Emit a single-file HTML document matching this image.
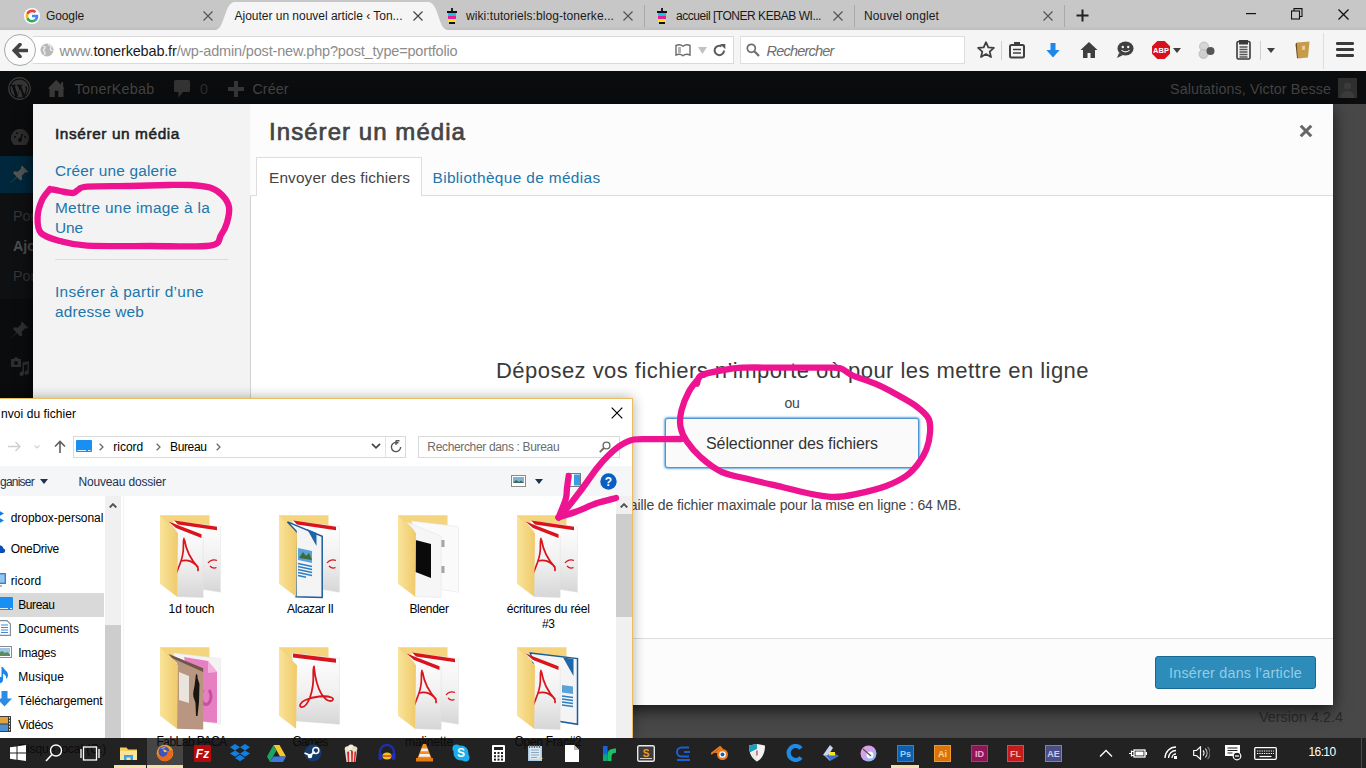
<!DOCTYPE html>
<html lang="fr">
<head>
<meta charset="utf-8">
<title>Ajouter un nouvel article</title>
<style>
*{box-sizing:border-box;margin:0;padding:0}
html,body{width:1366px;height:768px;overflow:hidden;background:#484848;font-family:"Liberation Sans",sans-serif;}
body{position:relative}
.abs{position:absolute}
.t{position:absolute;white-space:nowrap;line-height:1}
/* ---------- Firefox chrome ---------- */
#tabstrip{left:0;top:0;width:1366px;height:30px;background:linear-gradient(#c7c7c7 0,#c7c7c7 26px,#bebebe 30px)}
#navbar{left:0;top:30px;width:1366px;height:41px;background:#f5f5f5}
#activetab{left:234px;top:2px;width:195px;height:29px;background:#f5f5f5}
#urlbar{left:33px;top:36px;width:701px;height:28px;background:#fff;border:1px solid #d9d9d9;border-left:none}
#searchbar{left:740px;top:36px;width:225px;height:28px;background:#fff;border:1px solid #dedede}

/* firefox details */
.tabx{position:absolute;width:10px;height:10px}
.tabsep{position:absolute;top:5px;width:1px;height:22px;background:#a9a9a9}
.ff{font-size:12px;color:#1a1a1a}
.nsep{position:absolute;top:37px;width:1px;height:27px;background:#dcdcdc}
/* ---------- WP admin ---------- */
#adminbar{left:0;top:71px;width:1366px;height:33px;background:#0b0c0d}
#wpside{left:0;top:104px;width:33px;height:634px;background:#0b0c0d}

.ab{font-size:14.300px;color:#434343}
.ml{font-size:15.400px;color:#2076ab}
/* ---------- Modal ---------- */
#modal{left:33px;top:104px;width:1300px;height:601px;background:#fff;box-shadow:0 5px 15px rgba(0,0,0,.7)}
#mmenu{left:0;top:0;width:218px;height:601px;background:#f3f3f3;border-right:1px solid #d2d2d2}
#mtitle{left:217px;top:0;width:1083px;height:54px;background:#fcfcfc}
#mrouter{left:217px;top:54px;width:1083px;height:38px;background:#fcfcfc;border-bottom:1px solid #ddd}
#mtoolbar{left:217px;top:534px;width:1083px;height:67px;background:#fcfcfc;border-top:1px solid #ddd}
/* ---------- File dialog ---------- */
#fdlg{left:0;top:398px;width:633px;height:340px;background:#fff;border:none;box-shadow:0 0 12px rgba(0,0,0,.33);overflow:hidden}
.fd{font-size:12px;color:#000}
.tr{font-size:12px;color:#000}
.chev{position:absolute;width:5px;height:8px}
/* ---------- Taskbar ---------- */
#taskbar{left:0;top:738px;width:1366px;height:30px;background:#222}
</style>
</head>
<body>
<!-- FIREFOX -->
<div class="abs" id="tabstrip"></div>
<div class="abs" id="navbar"></div>
<div class="abs" id="activetab"></div>
<svg class="abs" style="left:215px;top:2px" width="20" height="28" viewBox="0 0 20 28"><path d="M0 28 C10 28 9 0 20 0 L20 28 Z" fill="#f5f5f5"/></svg>
<svg class="abs" style="left:428px;top:2px" width="20" height="28" viewBox="0 0 20 28"><path d="M20 28 C10 28 11 0 0 0 L0 28 Z" fill="#f5f5f5"/></svg>
<!-- tab 1 -->
<svg class="abs" style="left:24px;top:8px" width="16" height="16" viewBox="0 0 48 48"><circle cx="24" cy="24" r="24" fill="#fff"/><path fill="#EA4335" d="M24 12.5c3.5 0 6 1.500 7.500 2.800l5.500-5.400C33.600 6.800 29.200 4.800 24 4.800 16.500 4.800 10 9.100 6.800 15.400l6.400 5C14.800 15.800 19 12.500 24 12.500z"/><path fill="#4285F4" d="M42.800 24.400c0-1.600-.1-2.700-.4-3.900H24v7.300h10.600c-.2 1.800-1.400 4.500-4 6.300l6.200 4.800c3.700-3.400 6-8.400 6-14.500z"/><path fill="#FBBC05" d="M13.200 27.600c-.4-1.200-.6-2.400-.6-3.600s.2-2.500.6-3.600l-6.400-5C5.500 18 4.800 20.900 4.800 24s.7 6 2 8.600l6.400-5z"/><path fill="#34A853" d="M24 43.200c5.200 0 9.500-1.700 12.700-4.600l-6.200-4.800c-1.600 1.100-3.800 1.900-6.500 1.900-5 0-9.200-3.300-10.800-7.900l-6.400 5C10 38.900 16.500 43.200 24 43.200z"/></svg>
<span class="t ff" style="left:46px;top:10px;--w:38;letter-spacing:-0.117px">Google</span>
<svg class="tabx" style="left:203px;top:11px" viewBox="0 0 10 10"><path d="M0.500 0.500L9.500 9.500M9.500 0.500L0.500 9.500" stroke="#555" stroke-width="1.200" fill="none"/></svg>
<!-- tab 2 active -->
<span class="t ff" style="left:234.500px;top:10px;--w:168;letter-spacing:-0.016px">Ajouter un nouvel article ‹ Ton...</span>
<svg class="tabx" style="left:413px;top:11px" viewBox="0 0 10 10"><path d="M0.500 0.500L9.500 9.500M9.500 0.500L0.500 9.500" stroke="#444" stroke-width="1.200" fill="none"/></svg>
<!-- tab 3 -->
<svg class="abs" style="left:446px;top:8px" width="12" height="17" viewBox="0 0 12 17"><rect x="5" y="0" width="2" height="3" fill="#222"/><rect x="1" y="3" width="10" height="2" fill="#111"/><rect x="2" y="5" width="8" height="3" fill="#19c3e6"/><rect x="2" y="8" width="8" height="3" fill="#e81e9a"/><rect x="2" y="11" width="8" height="3" fill="#f5e61e"/><rect x="3" y="14" width="6" height="2" fill="#111"/></svg>
<span class="t ff" style="left:466px;top:10px;--w:148;letter-spacing:0.086px">wiki:tutoriels:blog-tonerke...</span>
<svg class="tabx" style="left:623px;top:11px" viewBox="0 0 10 10"><path d="M0.500 0.500L9.500 9.500M9.500 0.500L0.500 9.500" stroke="#555" stroke-width="1.200" fill="none"/></svg>
<div class="tabsep" style="left:644px"></div>
<!-- tab 4 -->
<svg class="abs" style="left:656px;top:8px" width="12" height="17" viewBox="0 0 12 17"><rect x="5" y="0" width="2" height="3" fill="#222"/><rect x="1" y="3" width="10" height="2" fill="#111"/><rect x="2" y="5" width="8" height="3" fill="#19c3e6"/><rect x="2" y="8" width="8" height="3" fill="#e81e9a"/><rect x="2" y="11" width="8" height="3" fill="#f5e61e"/><rect x="3" y="14" width="6" height="2" fill="#111"/></svg>
<span class="t ff" style="left:676px;top:10px;--w:145;letter-spacing:-0.468px">accueil [TONER KEBAB WI...</span>
<svg class="tabx" style="left:833px;top:11px" viewBox="0 0 10 10"><path d="M0.500 0.500L9.500 9.500M9.500 0.500L0.500 9.500" stroke="#555" stroke-width="1.200" fill="none"/></svg>
<div class="tabsep" style="left:854px"></div>
<!-- tab 5 -->
<span class="t ff" style="left:864px;top:10px;--w:75;letter-spacing:0.124px">Nouvel onglet</span>
<svg class="tabx" style="left:1043px;top:11px" viewBox="0 0 10 10"><path d="M0.500 0.500L9.500 9.500M9.500 0.500L0.500 9.500" stroke="#555" stroke-width="1.200" fill="none"/></svg>
<div class="tabsep" style="left:1064px"></div>
<svg class="abs" style="left:1076px;top:9px" width="13" height="13" viewBox="0 0 13 13"><path d="M6.500 0.500V12.500M0.500 6.500H12.500" stroke="#222" stroke-width="2" fill="none"/></svg>
<!-- window controls -->
<svg class="abs" style="left:1246px;top:13px" width="10" height="2" viewBox="0 0 10 2"><rect width="10" height="1.200" fill="#111"/></svg>
<svg class="abs" style="left:1291px;top:8px" width="12" height="12" viewBox="0 0 12 12"><rect x="0.500" y="3" width="8" height="8" fill="none" stroke="#111" stroke-width="1.100"/><path d="M3 3V0.600H11V8.500H8.500" fill="none" stroke="#111" stroke-width="1.100"/></svg>
<svg class="abs" style="left:1338px;top:9px" width="11" height="11" viewBox="0 0 11 11"><path d="M0.500 0.500L10.500 10.500M10.500 0.500L0.500 10.500" stroke="#111" stroke-width="1.300" fill="none"/></svg>
<!-- nav bar -->
<div class="abs" id="urlbar"></div>
<div class="abs" style="left:3.700px;top:33.800px;width:32px;height:32px;border-radius:50%;background:#fbfbfb;border:1px solid #a8a8a8"></div>
<svg class="abs" style="left:12px;top:42.500px" width="16" height="15" viewBox="0 0 16 15"><path d="M8 1.500L2.200 7.500L8 13.500M2.500 7.500H15" stroke="#444" stroke-width="3.600" fill="none" stroke-linejoin="miter" stroke-linecap="round"/></svg>
<svg class="abs" style="left:40px;top:43px" width="14" height="14" viewBox="0 0 14 14"><circle cx="7" cy="7" r="6.500" fill="#b9b9b9"/><path d="M3 3.500c1.500-.5 2.500.5 2 1.500s-2 1-1.500 2.500 1.500 1 1.500 2.500-.5 1.500-1 1M8 1.500c1 1 2.500.5 3 2s-1 1.500-.5 3 1.500 1 2 .5" stroke="#eee" stroke-width="1.300" fill="none"/></svg>
<span class="t" style="left:59.500px;top:44px;font-size:14.500px;color:#8c8c8c;--w:398;letter-spacing:-0.174px">www.<span style="color:#1a1a1a">tonerkebab.fr</span>/wp-admin/post-new.php?post_type=portfolio</span>
<svg class="abs" style="left:675px;top:44px" width="16" height="13" viewBox="0 0 16 13"><path d="M1 1.500c2.500-1 5-1 7 .8c2-1.800 4.500-1.800 7-.8v9.500c-2.500-1-5-1-7 .8c-2-1.800-4.500-1.800-7-.8z" fill="none" stroke="#6a6a6a" stroke-width="1.400"/><path d="M3 4h3M3 6h3M3 8h3" stroke="#6a6a6a" stroke-width="1"/></svg>
<svg class="abs" style="left:698px;top:47px" width="9" height="7" viewBox="0 0 9 7"><path d="M0 0H9L4.500 7Z" fill="#c2c2c2"/></svg>
<svg class="abs" style="left:713px;top:44px" width="13" height="13" viewBox="0 0 13 13"><path d="M11 6.500A4.700 4.700 0 1 1 8.500 2.300" fill="none" stroke="#5a5a5a" stroke-width="2"/><path d="M7 0H12.300V5.300Z" fill="#5a5a5a"/></svg>
<div class="abs" id="searchbar"></div>
<svg class="abs" style="left:746px;top:43px" width="14" height="14" viewBox="0 0 14 14"><circle cx="5.300" cy="5.300" r="4" fill="none" stroke="#6e6e6e" stroke-width="1.700"/><path d="M8.300 8.300L13 13" stroke="#6e6e6e" stroke-width="2.200"/></svg>
<span class="t" style="left:766.500px;top:44px;font-size:14.500px;font-style:italic;color:#6d6d6d;--w:67;letter-spacing:-0.795px">Rechercher</span>
<!-- toolbar icons -->
<svg class="abs" style="left:976px;top:40px" width="20" height="19" viewBox="0 0 20 19"><path d="M10 2.200l2.300 5.200 5.600.5-4.200 3.700 1.300 5.500-5-3-5 3 1.300-5.500L2.100 7.900l5.600-.5z" fill="none" stroke="#3f3f3f" stroke-width="1.800" stroke-linejoin="round"/></svg>
<div class="nsep" style="left:1001px;top:41px;height:19px;background:#cfcfcf"></div>
<svg class="abs" style="left:1009px;top:41px" width="16" height="18" viewBox="0 0 16 18"><rect x="1" y="4" width="14" height="12.500" rx="1.500" fill="none" stroke="#3f3f3f" stroke-width="2"/><rect x="5" y="1" width="6" height="4" fill="#3f3f3f"/><path d="M4 8.500h8M4 12h8" stroke="#3f3f3f" stroke-width="1.600"/></svg>
<svg class="abs" style="left:1046px;top:43px" width="14" height="15" viewBox="0 0 16 18"><path d="M5 0h6v8.500h5L8 17.500 0 8.500h5z" fill="#1e88e8"/></svg>
<svg class="abs" style="left:1080px;top:41px" width="18" height="17" viewBox="0 0 18 17"><path d="M9 1L0.500 9h2.500v8h4.500v-5h3v5h4.500V9h2.500z" fill="#3f3f3f"/></svg>
<svg class="abs" style="left:1116px;top:41px" width="18" height="18" viewBox="0 0 18 18"><ellipse cx="9.500" cy="7.500" rx="8" ry="7" fill="#3f3f3f"/><path d="M3 12l-2 5 6-3z" fill="#3f3f3f"/><circle cx="6.800" cy="6" r="1.200" fill="#f4f4f4"/><circle cx="12.200" cy="6" r="1.200" fill="#f4f4f4"/><path d="M5.500 9c2 2.500 6 2.500 8 0" stroke="#f4f4f4" stroke-width="1.200" fill="none"/></svg>
<svg class="abs" style="left:1152px;top:41px" width="18" height="18" viewBox="0 0 18 18"><path d="M5.300 0h7.400L18 5.300v7.400L12.700 18H5.300L0 12.700V5.300z" fill="#d8121c"/><text x="9" y="12" font-family="Liberation Sans" font-weight="bold" font-size="7.500" fill="#fff" text-anchor="middle">ABP</text></svg>
<svg class="abs" style="left:1173px;top:48px" width="8" height="5" viewBox="0 0 8 5"><path d="M0 0h8L4 5z" fill="#3f3f3f"/></svg>
<svg class="abs" style="left:1197px;top:41px" width="20" height="19" viewBox="0 0 20 19"><circle cx="7" cy="5.500" r="4.500" fill="#d6d6d6" stroke="#aaa" stroke-width=".6"/><circle cx="6.500" cy="13" r="4.500" fill="#cfcfcf" stroke="#aaa" stroke-width=".6"/><circle cx="13.500" cy="10" r="4" fill="#555"/></svg>
<svg class="abs" style="left:1236px;top:40px" width="15" height="20" viewBox="0 0 15 20"><rect x="1" y="1.500" width="13" height="17.500" rx="1.500" fill="#f0f0f0" stroke="#3a3a3a" stroke-width="1.600"/><rect x="3" y="0" width="9" height="4.500" fill="#3a3a3a"/><path d="M3.500 7h8M3.500 9.500h8M3.500 12h8M3.500 14.500h8M3.500 17h8" stroke="#555" stroke-width="1.300"/></svg>
<div class="nsep" style="left:1260px;top:41px;height:19px;background:#cfcfcf"></div>
<svg class="abs" style="left:1267px;top:48px" width="8" height="5" viewBox="0 0 8 5"><path d="M0 0h8L4 5z" fill="#3f3f3f"/></svg>
<svg class="abs" style="left:1294px;top:41px" width="17" height="18" viewBox="0 0 17 18"><path d="M3 1.500L15.500 0.500 14 16.500 4 17.500z" fill="#c89b4a"/><path d="M3 1.500L1.500 3 3 17 4 17.500z" fill="#6b4a1c"/><path d="M8 5l3-.3v4l-3 .3z" fill="#e9cf96"/></svg>
<div class="nsep" style="left:1323px;top:33px;height:36px;background:#dedede"></div>
<svg class="abs" style="left:1336px;top:42px" width="18" height="15" viewBox="0 0 18 15"><rect y="0" width="18" height="3" rx="1.200" fill="#3a3a3a"/><rect y="6" width="18" height="3" rx="1.200" fill="#3a3a3a"/><rect y="12" width="18" height="3" rx="1.200" fill="#3a3a3a"/></svg>
<!-- WP -->
<div class="abs" id="adminbar"></div>
<div class="abs" id="wpside"></div>
<div class="abs" style="left:0;top:156px;width:33px;height:37px;background:#00273b"></div>
<div class="abs" style="left:0;top:193px;width:33px;height:106px;background:#0f1012"></div>
<!-- admin bar items -->
<svg class="abs" style="left:8px;top:76.500px" width="23" height="23" viewBox="0 0 22 22"><circle cx="11" cy="11" r="10.300" fill="none" stroke="#3a3a3a" stroke-width="1.200"/><circle cx="11" cy="11" r="8.700" fill="#343434"/><path d="M3 7.500h4.300v1h-1l3 8.500 1.600-4.800-1.300-3.700h-1v-1h5v1h-1l3 8.500 1.200-3.700c.6-1.800.3-3-.6-3.800l1-.8c1.200 1.300 1.300 3 .7 4.800L16 20h-1.300l-3.200-8.800L8.600 20H7.300L3.800 8.500H3z" fill="#0b0c0d"/></svg>
<svg class="abs" style="left:48px;top:80px" width="17" height="17" viewBox="0 0 17 17"><path d="M8.200 0L0 8.200 1.500 9.300V17H6.800V10.800H10.300V17H15.500V9.300L16.600 8.300 15.200 6.900V2.200H13V4.700z" fill="#393939"/></svg>
<span class="t ab" style="left:74.500px;top:81.500px;--w:80;letter-spacing:0.289px">TonerKebab</span>
<svg class="abs" style="left:174px;top:80px" width="16" height="18" viewBox="0 0 16 18"><path d="M1.500 0h13a1.500 1.500 0 0 1 1.500 1.500v9a1.500 1.500 0 0 1-1.500 1.500H9l-4.500 5.500V12h-3A1.500 1.500 0 0 1 0 10.500v-9A1.500 1.500 0 0 1 1.500 0z" fill="#333"/></svg>
<span class="t ab" style="left:200px;top:81.500px;color:#2c2c2c;--w:8;letter-spacing:0.047px">0</span>
<svg class="abs" style="left:228px;top:81px" width="16" height="16" viewBox="0 0 16 16"><path d="M6 0h4v6h6v4h-6v6H6v-6H0V6h6z" fill="#363636"/></svg>
<span class="t ab" style="left:252.500px;top:81.500px;--w:36;letter-spacing:0.050px">Créer</span>
<span class="t ab" style="left:1170px;top:81.500px;--w:161;letter-spacing:0.092px">Salutations, Victor Besse</span>
<div class="abs" style="left:1338px;top:78px;width:19px;height:20px;background:#2f2f2f"></div>
<svg class="abs" style="left:1338px;top:78px" width="19" height="20" viewBox="0 0 19 20"><circle cx="9.500" cy="8" r="3.600" fill="#3b3b3b"/><path d="M2.500 20c0-5 3-7 7-7s7 2 7 7z" fill="#3b3b3b"/></svg>
<!-- sidebar icons -->
<svg class="abs" style="left:11px;top:129px" width="18" height="16" viewBox="0 0 18 16"><path d="M9 0a9 9 0 0 0-7.200 14.400c.6.900 1.500 1.600 2.200 1.600h10c.7 0 1.600-.7 2.200-1.600A9 9 0 0 0 9 0z" fill="#2e2e2e"/><circle cx="9" cy="11" r="2" fill="#0b0c0d"/><path d="M9 11l2.500-6" stroke="#0b0c0d" stroke-width="1.500"/><circle cx="4" cy="8" r="1" fill="#0b0c0d"/><circle cx="6" cy="4.200" r="1" fill="#0b0c0d"/><circle cx="14" cy="8" r="1" fill="#0b0c0d"/></svg>
<svg class="abs" style="left:10px;top:165px" width="19" height="19" viewBox="0 0 19 19"><path d="M12 0.500l6.500 6.500-1.800.6-1.400-.3-3.500 3.500.4 3.600-1.700 1.200-3.600-3.600L1 17.800.500 18l.3-.5L6.500 11.500 3 8l1.200-1.700 3.600.4L11.300 3.200 11 1.800z" fill="#545454"/></svg>
<span class="t ab" style="left:13px;top:209px;color:#343537">Portfolio</span>
<span class="t ab" style="left:13px;top:239px;color:#4d4d4d;font-weight:bold">Ajouter</span>
<span class="t ab" style="left:13px;top:269px;color:#343537">Portfolio</span>
<svg class="abs" style="left:10px;top:321px" width="19" height="19" viewBox="0 0 19 19"><path d="M12 0.500l6.500 6.500-1.800.6-1.400-.3-3.500 3.500.4 3.600-1.700 1.200-3.600-3.600L1 17.800.500 18l.3-.5L6.500 11.500 3 8l1.200-1.700 3.600.4L11.300 3.200 11 1.800z" fill="#2f2f2f"/></svg>
<svg class="abs" style="left:10px;top:357px" width="20" height="20" viewBox="0 0 20 20"><path d="M1 2h2.500l1-1.500h3L8.500 2H11v8H1z" fill="#2f2f2f"/><circle cx="6" cy="6" r="2" fill="#0b0c0d"/><path d="M12.500 5.500L19 4v11.500a2.200 2.200 0 1 1-1.500-2V7.300l-3.500.8v8.500a2.200 2.200 0 1 1-1.500-2z" fill="#2f2f2f"/></svg>
<!-- version -->
<span class="t ab" style="left:1259px;top:710px;color:#2a2a2a;--w:84;letter-spacing:0.041px">Version 4.2.4</span>
<!-- MODAL -->
<div class="abs" id="modal">
  <div class="abs" id="mmenu"></div>
  <div class="abs" id="mtitle"></div>
  <div class="abs" id="mrouter"></div>
  <div class="abs" id="mtoolbar"></div>
  <!-- left menu (coords relative to modal: subtract 33,104) -->
  <span class="t" style="left:22px;top:22px;font-size:15.400px;-webkit-text-stroke:.55px #222;color:#222;--w:125;letter-spacing:0.594px">Insérer un média</span>
  <span class="t ml" style="left:22px;top:59px;--w:122;letter-spacing:0.181px">Créer une galerie</span>
  <span class="t ml" style="left:22px;top:96px;--w:155;letter-spacing:0.292px">Mettre une image à la</span>
  <span class="t ml" style="left:22px;top:116px;--w:28;letter-spacing:-0.078px">Une</span>
  <div class="abs" style="left:22px;top:155px;width:173px;height:1px;background:#dcdcdc"></div>
  <span class="t ml" style="left:22px;top:179.500px;--w:149;letter-spacing:0.317px">Insérer à partir d’une</span>
  <span class="t ml" style="left:22px;top:200px;--w:89;letter-spacing:0.158px">adresse web</span>
  <!-- title -->
  <span class="t" style="left:236px;top:16px;font-size:24px;-webkit-text-stroke:.7px #444;color:#444;--w:197;letter-spacing:1.057px">Insérer un média</span>
  <svg class="abs" style="left:1266px;top:20px" width="14" height="14" viewBox="0 0 12 12"><path d="M1.500 1.500L10.500 10.500M10.500 1.500L1.500 10.500" stroke="#666" stroke-width="2.600" fill="none"/></svg>
  <!-- tabs -->
  <div class="abs" style="left:223px;top:53px;width:166px;height:39px;background:#fff;border:1px solid #ddd;border-bottom:none"></div>
  <span class="t" style="left:236px;top:65.500px;font-size:15.400px;color:#444;--w:141;letter-spacing:0.121px">Envoyer des fichiers</span>
  <span class="t ml" style="left:399.500px;top:65.500px;--w:168;letter-spacing:0.363px">Bibliothèque de médias</span>
  <!-- uploader -->
  <span class="t" style="left:463px;top:256px;font-size:22px;color:#3a3a3a;--w:593;letter-spacing:0.463px">Déposez vos fichiers n’importe où pour les mettre en ligne</span>
  <span class="t" style="left:751.500px;top:292px;font-size:14px;color:#444;--w:15;letter-spacing:-0.289px">ou</span>
  <div class="abs" style="left:632px;top:314px;width:254px;height:50px;background:#fafafa;border:1px solid #4f94d4;border-radius:3px;box-shadow:0 0 2px 1px rgba(60,145,210,.75), inset 0 1px 0 #fff"></div>
  <span class="t" style="left:673px;top:332px;font-size:16px;color:#333;--w:172;letter-spacing:-0.092px">Sélectionner des fichiers</span>
  <span class="t" style="left:590px;top:393.500px;font-size:14px;color:#444;--w:338;letter-spacing:-0.132px">Taille de fichier maximale pour la mise en ligne : 64 MB.</span>
  <!-- insert button -->
  <div class="abs" style="left:1122px;top:552px;width:161px;height:33px;background:#2e8cba;border:1px solid #176892;border-radius:3px"></div>
  <span class="t" style="left:1136px;top:562px;font-size:14.300px;color:#94cde7;--w:133;letter-spacing:0.230px">Insérer dans l’article</span>
</div>
<!-- FILE DIALOG -->
<svg width="0" height="0" style="position:absolute">
<defs>
<linearGradient id="gpg" x1="0" y1="0" x2="0" y2="1"><stop offset="0" stop-color="#ffffff"/><stop offset=".55" stop-color="#f0f0f0"/><stop offset="1" stop-color="#d6d6d6"/></linearGradient>
<linearGradient id="gfl" x1="0" y1="0" x2="1" y2="0"><stop offset="0" stop-color="#f9e39a"/><stop offset="1" stop-color="#f0ca6a"/></linearGradient>
<symbol id="fback" viewBox="0 0 66 88"><path d="M2 2.200H51.500V60H2z" fill="#f4d47c"/></symbol>
<symbol id="ffront" viewBox="0 0 66 88"><path d="M2 2.600L20 20.300 19.100 83.700 2 70.700z" fill="url(#gfl)"/></symbol>
<symbol id="pdf2" viewBox="0 0 66 88"><path d="M15.300 8L62.500 13.600V79.300L45.200 76.500 30 60z" fill="url(#gpg)" stroke="#e3e3e3" stroke-width=".5"/><path d="M16.200 7.500L59 13.800V17.300L20 11.500z" fill="#d9141c"/><path d="M50 50c2-3 6-4 9-2.500M52 53c2 2 4.500 2.500 6.500 1.500" stroke="#d9141c" stroke-width="1.300" fill="none"/></symbol>
<symbol id="pdf1" viewBox="0 0 66 88"><path d="M10.500 8.900L45.200 23.200V84.400L19 83.700 19 18z" fill="url(#gpg)" stroke="#dcdcdc" stroke-width=".5"/><path d="M10.500 8.400L43.500 21.300V25L18 15z" fill="#d9141c"/><path d="M26 25.500c-1.800 5 1.500 11-3.500 24 -1.300 3.500-3 8-4 10M23 48c5-1.500 10-.5 14.500 3.500 2 2 3 4 2.500 6M26.500 27c1.500 9 4.500 18 13.500 27" stroke="#d9141c" stroke-width="1.700" fill="none" stroke-linecap="round"/></symbol>
<symbol id="pdfbig" viewBox="0 0 66 88"><path d="M15 8L62.500 13.600V79.300L19 76z" fill="url(#gpg)" stroke="#dcdcdc" stroke-width=".5"/><path d="M16 8.500L59 13.800V17.800L16 12.500z" fill="#d9141c"/><path d="M37 21.500c-2.300 6 2 14-4 31-2 5-5.500 10.500-9 9.500-2.500-1 0-5 4.500-7 8-3.500 20-5 26-2.500 2.500 1 2 3.500-1 3.500-5.500 0-14-9-16.500-34z" stroke="#d9141c" stroke-width="1.800" fill="none" stroke-linejoin="round"/></symbol>
</defs></svg>

<div class="abs" id="fdlg">
<div class="abs" style="left:0;top:68px;width:633px;height:30px;background:#f5f6f7"></div>
<span class="t fd" style="left:1px;top:10.2px;--w:75;letter-spacing:0.064px">nvoi du fichier</span>
<svg class="abs" style="left:611px;top:9px" width="12" height="12" viewBox="0 0 12 12"><path d="M0.700 0.700L11.300 11.300M11.300 0.700L0.700 11.300" stroke="#000" stroke-width="1.200" fill="none"/></svg>
<svg class="abs" style="left:8px;top:43px" width="13" height="11" viewBox="0 0 13 11"><path d="M0 5.500H12M7.500 1L12 5.500 7.500 10" stroke="#cfcfcf" stroke-width="1.400" fill="none"/></svg>
<svg class="abs" style="left:34px;top:47px" width="6" height="4" viewBox="0 0 6 4"><path d="M0.500 0.500L3 3 5.500 0.500" stroke="#cfcfcf" stroke-width="1.100" fill="none"/></svg>
<svg class="abs" style="left:54px;top:42px" width="12" height="13" viewBox="0 0 12 13"><path d="M6 13V1.500M1 6.500L6 1.500 11 6.500" stroke="#5e5e5e" stroke-width="1.600" fill="none"/></svg>
<div class="abs" style="left:73px;top:38px;width:333px;height:22px;border:1px solid #d9d9d9;background:#fff"></div>
<div class="abs" style="left:385px;top:39px;width:1px;height:20px;background:#e2e2e2"></div>
<svg class="abs" style="left:76px;top:42px" width="16" height="12" viewBox="0 0 16 12"><rect width="16" height="12" rx="1" fill="#1a8ff2"/><path d="M1.500 10.500H10M12 10.500H14.500" stroke="#d9efff" stroke-width="1"/></svg>
<svg class="chev" style="left:98.5px;top:44.5px" viewBox="0 0 5 8"><path d="M0.700 0.700L4 4 0.700 7.300" stroke="#6b6b6b" stroke-width="1.300" fill="none"/></svg>
<span class="t fd" style="left:113.3px;top:43.0px;--w:30;letter-spacing:-0.003px">ricord</span>
<svg class="chev" style="left:155.5px;top:44.5px" viewBox="0 0 5 8"><path d="M0.700 0.700L4 4 0.700 7.300" stroke="#6b6b6b" stroke-width="1.300" fill="none"/></svg>
<span class="t fd" style="left:170px;top:43.0px;--w:36.6;letter-spacing:-0.351px">Bureau</span>
<svg class="chev" style="left:215.5px;top:44.5px" viewBox="0 0 5 8"><path d="M0.700 0.700L4 4 0.700 7.300" stroke="#6b6b6b" stroke-width="1.300" fill="none"/></svg>
<svg class="abs" style="left:371px;top:45px" width="10" height="6" viewBox="0 0 10 6"><path d="M1 0.800L5 4.800 9 0.800" stroke="#444" stroke-width="1.700" fill="none"/></svg>
<svg class="abs" style="left:390px;top:42px" width="12" height="13" viewBox="0 0 12 13"><path d="M8.500 3.200A4.600 4.600 0 1 0 10.600 7" fill="none" stroke="#555" stroke-width="1.400"/><path d="M6 0.500V5M6 0.800H9.500" stroke="#555" stroke-width="1.400" fill="none"/></svg>
<div class="abs" style="left:418px;top:38px;width:202px;height:22px;border:1px solid #d9d9d9;background:#fff"></div>
<span class="t fd" style="left:427.3px;top:43.0px;--w:132;letter-spacing:-0.337px;color:#6d6d6d">Rechercher dans : Bureau</span>
<svg class="abs" style="left:599px;top:43px" width="12" height="12" viewBox="0 0 12 12"><circle cx="7.500" cy="4.500" r="3.400" fill="none" stroke="#6a6a6a" stroke-width="1.400"/><path d="M5 7L0.800 11.200" stroke="#6a6a6a" stroke-width="1.800"/></svg>
<span class="t fd" style="left:0px;top:77.5px;--w:34;letter-spacing:-0.766px;color:#1e3251">ganiser</span>
<svg class="abs" style="left:40px;top:81px" width="8" height="5" viewBox="0 0 8 5"><path d="M0 0H8L4 5z" fill="#1e3251"/></svg>
<span class="t fd" style="left:78.5px;top:77.5px;--w:87.3;letter-spacing:-0.184px;color:#1e3251">Nouveau dossier</span>
<svg class="abs" style="left:511px;top:77px" width="15" height="12" viewBox="0 0 15 12"><rect x=".5" y=".5" width="14" height="11" fill="#fff" stroke="#8a8a8a"/><rect x="2" y="2" width="11" height="6" fill="#7fb2d8"/><path d="M2 8l3-3 3 2 2-1.500 3 2.500z" fill="#3d6b4f"/></svg>
<svg class="abs" style="left:535px;top:81px" width="8" height="5" viewBox="0 0 8 5"><path d="M0 0H8L4 5z" fill="#1e3251"/></svg>
<svg class="abs" style="left:566px;top:75px" width="15" height="14" viewBox="0 0 15 14"><rect x=".5" y=".5" width="14" height="13" fill="#fff" stroke="#7a7a7a"/><rect x="8" y="1.500" width="6" height="11" fill="#3a9be8"/></svg>
<svg class="abs" style="left:600px;top:75px" width="17" height="17" viewBox="0 0 17 17"><circle cx="8.500" cy="8.500" r="8.200" fill="#0a5fc2"/><text x="8.500" y="13" font-family="Liberation Sans" font-weight="bold" font-size="12" fill="#fff" text-anchor="middle">?</text></svg>
<div class="abs" style="left:0;top:195px;width:104px;height:24px;background:#d9d9d9"></div>
<div class="abs" style="left:105px;top:98px;width:16px;height:242px;background:#f0f0f0"></div>
<div class="abs" style="left:105px;top:227px;width:16px;height:113px;background:#cdcdcd"></div>
<svg class="abs" style="left:109px;top:105px" width="8" height="5" viewBox="0 0 8 5"><path d="M0.700 4.500L4 1.200 7.300 4.500" stroke="#505050" stroke-width="1.900" fill="none"/></svg>
<div class="abs" style="left:123px;top:98px;width:1px;height:242px;background:#f4f4f4"></div>
<span class="t tr" style="left:10.7px;top:113.5px;--w:92.7;letter-spacing:-0.044px">dropbox-personal</span>
<span class="t tr" style="left:10.7px;top:145.2px;--w:48.3;letter-spacing:-0.298px">OneDrive</span>
<span class="t tr" style="left:10.7px;top:177.0px;--w:30.6;letter-spacing:0.097px">ricord</span>
<span class="t tr" style="left:18.2px;top:201.1px;--w:36.4;letter-spacing:-0.384px">Bureau</span>
<span class="t tr" style="left:18.2px;top:225.2px;--w:60.8;letter-spacing:0.011px">Documents</span>
<span class="t tr" style="left:18.2px;top:249.2px;--w:37.8;letter-spacing:-0.260px">Images</span>
<span class="t tr" style="left:18.2px;top:273.0px;--w:45.8;letter-spacing:0.063px">Musique</span>
<span class="t tr" style="left:18.2px;top:297.0px;--w:84.2;letter-spacing:-0.180px">Téléchargement</span>
<span class="t tr" style="left:18.2px;top:321.1px;--w:34.8;letter-spacing:-0.281px">Vidéos</span>
<span class="t tr" style="left:18.2px;top:345.1px;--w:88;letter-spacing:-0.041px">Disque local (C:)</span>
<svg class="abs" style="left:-8px;top:112px" width="12" height="14" viewBox="0 0 12 14"><path d="M6 0l6 3.500-6 3.500 6 3.500-6 3.500-6-3.500 6-3.500-6-3.500z" fill="#0d7fe6"/></svg>
<svg class="abs" style="left:-8px;top:146px" width="14" height="9" viewBox="0 0 14 9"><path d="M3 9a3 3 0 0 1 .5-6 4.500 4.500 0 0 1 8 1.500 2.300 2.300 0 0 1-.5 4.500z" fill="#0a4fb8"/></svg>
<svg class="abs" style="left:-9px;top:175px" width="15" height="14" viewBox="0 0 15 14"><rect x=".7" y=".7" width="13.600" height="9.600" fill="#8ec6f5" stroke="#3a6ea8" stroke-width="1.200"/><path d="M4 13h7M7.500 10.500V13" stroke="#6a6a6a" stroke-width="1.200"/></svg>
<svg class="abs" style="left:-3px;top:199px" width="16" height="14" viewBox="0 0 16 14"><rect width="16" height="13" rx="1" fill="#1a8ff2"/><path d="M1.500 11.500H11M13 11.500H15" stroke="#d9efff" stroke-width="1"/></svg>
<svg class="abs" style="left:-2px;top:222px" width="13" height="16" viewBox="0 0 13 16"><path d="M.6 .6H9L12.400 4V15.400H.6z" fill="#fff" stroke="#7d8a96" stroke-width="1.100"/><path d="M3 5h7M3 7.500h7M3 10h7M3 12.500h7" stroke="#3a8ad6" stroke-width="1"/></svg>
<svg class="abs" style="left:-3px;top:248px" width="15" height="12" viewBox="0 0 15 12"><rect x=".5" y=".5" width="14" height="11" fill="#fff" stroke="#8a8a8a"/><rect x="2" y="2" width="11" height="5" fill="#9cc7e6"/><path d="M2 10V7l3-2 3 2 2-1 3 2v2z" fill="#5b8b5e"/></svg>
<svg class="abs" style="left:-2px;top:269px" width="12" height="17" viewBox="0 0 12 17"><path d="M5 0c1 3 5 4 5 8 0 2-1 3-2 4 .5-3-1-4.500-3-5.500V13a3.200 3.200 0 1 1-1.500-2.700V0z" fill="#1a86e8"/></svg>
<svg class="abs" style="left:-3px;top:293px" width="15" height="16" viewBox="0 0 15 16"><path d="M4.500 0h6v7.500H15L7.500 15.500 0 7.500h4.500z" fill="#2b8be6"/></svg>
<svg class="abs" style="left:-3px;top:318px" width="14" height="16" viewBox="0 0 14 16"><rect width="14" height="16" fill="#3c3c3c"/><rect x="3" y="1" width="8" height="6.500" fill="#e2a33a"/><rect x="3" y="8.500" width="8" height="6.500" fill="#4d8fd1"/><path d="M1.500 1v14M12.500 1v14" stroke="#eee" stroke-width="1" stroke-dasharray="1.500 1.500"/></svg>
<div class="abs" style="left:616px;top:98px;width:16px;height:242px;background:#f0f0f0"></div>
<div class="abs" style="left:616px;top:116px;width:16px;height:103px;background:#cdcdcd"></div>
<svg class="abs" style="left:620px;top:105px" width="8" height="5" viewBox="0 0 8 5"><path d="M0.700 4.500L4 1.200 7.300 4.500" stroke="#505050" stroke-width="1.900" fill="none"/></svg>
<svg class="abs" style="left:158px;top:115px" width="66" height="88" viewBox="0 0 66 88"><use href="#fback"/><use href="#pdf2"/><use href="#pdf1"/><use href="#ffront"/></svg>
<svg class="abs" style="left:277px;top:115px" width="66" height="88" viewBox="0 0 66 88"><use href="#fback"/><use href="#pdf2"/><path d="M10.500 8.900L45.200 23.200V84.400L19 83.700 19 18z" fill="#f4f4f4" stroke="#1d5c9a" stroke-width="1.500"/><path d="M30 16L39.500 20V33z" fill="#1d66a8"/><path d="M21 35L35 38V50L21 47z" fill="#5aa3d8"/><path d="M22 45l4-6 3 4 3-3 3 7z" fill="#3d6b3a"/><path d="M21 50.500L35 53.500M21 53.500L35 56.500M21 56.500L35 59.500M21 59.500L35 62.500M21 62.500L29 64.200" stroke="#2d7fc4" stroke-width="1.400"/><use href="#ffront"/></svg>
<svg class="abs" style="left:396px;top:115px" width="66" height="88" viewBox="0 0 66 88"><use href="#fback"/><path d="M15.300 8L62.500 13.600V79.300L45.200 76.500 30 60z" fill="#fafafa" stroke="#e3e3e3" stroke-width=".5"/><path d="M44 27h4.500v7H44zM44 53h4.500v7H44z" fill="#a5a5a5"/><path d="M10.500 8.900L45.200 23.200V84.400L19 83.700 19 18z" fill="#f6f6f6" stroke="#e0e0e0" stroke-width=".5"/><path d="M19.500 27L35 31V65L19.500 59z" fill="#0a0a0a"/><use href="#ffront"/></svg>
<svg class="abs" style="left:515px;top:115px" width="66" height="88" viewBox="0 0 66 88"><use href="#fback"/><use href="#pdf2"/><use href="#pdf1"/><use href="#ffront"/></svg>
<svg class="abs" style="left:158px;top:247px" width="66" height="88" viewBox="0 0 66 88"><use href="#fback"/><path d="M15.300 8L62.500 13.600V79.300L45.200 76.500 30 60z" fill="#f3f3f3" stroke="#e3e3e3" stroke-width=".5"/><path d="M26 12L50 16 59 27V78L40 76z" fill="#e77fc3"/><path d="M50 16L59 27 50 28z" fill="#f3b1dc"/><path d="M45 45a5 8 0 1 0 6 0" stroke="#c94fa3" stroke-width="3" fill="none"/><path d="M10.500 8.900L45.200 23.200V84.400L19 83.700 19 18z" fill="#b99682"/><path d="M21 27L31 31V58L21 55z" fill="#e9e4dc"/><path d="M38 29c1 0 2 2 1.500 4l2 6-.5 18-1.500 14h-1.500l-.5-13-2-6c-1-4 .5-8 1-11z" fill="#1b1512"/><path d="M10.500 8.900L45.200 23.200V27L14 13z" fill="#6e5546"/><use href="#ffront"/></svg>
<svg class="abs" style="left:277px;top:247px" width="66" height="88" viewBox="0 0 66 88"><use href="#fback"/><use href="#pdfbig"/><use href="#ffront"/></svg>
<svg class="abs" style="left:396px;top:247px" width="66" height="88" viewBox="0 0 66 88"><use href="#fback"/><use href="#pdf2"/><use href="#pdf1"/><use href="#ffront"/></svg>
<svg class="abs" style="left:515px;top:247px" width="66" height="88" viewBox="0 0 66 88"><use href="#fback"/><path d="M15.300 8L62.500 13.600V79.300L45.200 76.500 30 60z" fill="#f4f4f4" stroke="#1d5c9a" stroke-width="1.500"/><path d="M48 12.500L58.500 14V31z" fill="#1d66a8"/><path d="M47 40L58 41.500V49L47 47.500z" fill="#5aa3d8"/><path d="M47 51L58 52.500M47 54L58 55.500M47 57L58 58.500M47 60L58 61.500" stroke="#2d7fc4" stroke-width="1.300"/><use href="#pdf1"/><use href="#ffront"/></svg>
<span class="t fd" style="left:168.5px;top:205.4px;--w:46;letter-spacing:-0.006px">1d touch</span>
<span class="t fd" style="left:287.1px;top:205.4px;--w:46.5;letter-spacing:-0.352px">Alcazar II</span>
<span class="t fd" style="left:409.4px;top:205.4px;--w:39.2;letter-spacing:-0.311px">Blender</span>
<span class="t fd" style="left:506.7px;top:205.4px;--w:83;letter-spacing:-0.179px">écritures du réel</span>
<span class="t fd" style="left:542.0px;top:220.2px;--w:12.6;letter-spacing:-0.380px">#3</span>
<span class="t fd" style="left:156.5px;top:337.0px;--w:70;letter-spacing:-0.530px">FabLab PACA</span>
<span class="t fd" style="left:292.5px;top:337.0px;--w:35;letter-spacing:-0.738px">Games</span>
<span class="t fd" style="left:405.0px;top:337.0px;--w:48;letter-spacing:-0.078px">malinette</span>
<span class="t fd" style="left:514.5px;top:337.0px;--w:67;letter-spacing:-0.277px">Open Frac#2</span>
<div class="abs" style="left:0;top:0;width:633px;height:1px;background:#ecbd5f"></div>
<div class="abs" style="left:632px;top:0;width:1px;height:340px;background:#ecbd5f"></div>
</div>
<!-- ANNOTATIONS -->
<svg class="abs" style="left:0;top:0;pointer-events:none" width="1366" height="768" viewBox="0 0 1366 768" fill="none" stroke="#ee1491" stroke-width="6.300" stroke-linecap="round" stroke-linejoin="round">
<path d="M50.0 189.0C48.7 190.8 44.1 195.3 42.0 200.0C39.9 204.7 37.8 211.5 37.6 217.0C37.4 222.5 37.3 229.0 41.0 233.0C44.7 237.0 52.3 238.9 60.0 241.0C67.7 243.1 72.0 244.8 87.0 245.6C102.0 246.4 129.5 246.0 150.0 246.0C170.5 246.0 198.2 247.4 210.0 245.6C221.8 243.8 218.2 238.8 221.0 235.0C223.8 231.2 225.7 227.4 227.0 222.7C228.3 218.0 229.8 211.6 229.0 207.0C228.2 202.4 225.2 198.2 222.0 195.0C218.8 191.8 215.3 189.3 210.0 187.6C204.7 185.9 196.8 185.4 190.0 185.0C183.2 184.6 179.0 184.8 169.0 185.0C159.0 185.2 143.7 185.7 130.0 186.0C116.3 186.3 95.7 186.0 87.0 186.7C78.3 187.4 80.4 188.9 78.0 190.0C75.6 191.1 75.7 192.8 72.7 193.0C69.7 193.2 63.8 191.7 60.0 191.0C56.2 190.3 51.7 189.3 50.0 189.0"/>
<path d="M697.0 383.7C697.7 382.3 696.9 377.7 701.0 375.5C705.1 373.3 714.7 371.7 721.5 370.4C728.3 369.1 731.8 368.1 742.0 367.7C752.2 367.2 769.3 367.7 783.0 367.7C796.7 367.7 814.4 367.6 824.0 367.7C833.6 367.8 835.6 367.0 840.4 368.3C845.2 369.6 846.9 372.9 852.7 375.5C858.5 378.1 868.0 380.6 875.2 383.7C882.4 386.8 888.9 390.2 895.7 394.0C902.5 397.8 910.7 402.1 916.2 406.2C921.7 410.3 926.2 414.1 928.5 418.5C930.8 422.9 930.4 427.8 930.0 432.9C929.6 438.0 928.4 444.2 926.4 449.3C924.4 454.4 921.6 459.2 918.2 463.6C914.8 468.1 911.5 472.2 906.0 476.0C900.5 479.8 894.0 483.1 885.5 486.2C877.0 489.3 863.2 492.6 854.7 494.4C846.2 496.2 841.0 497.0 834.2 497.0C827.4 497.0 822.2 496.0 813.7 494.4C805.2 492.8 793.2 489.6 783.0 487.2C772.8 484.8 762.5 482.6 752.2 480.0C742.0 477.4 730.0 475.6 721.5 471.8C713.0 468.1 706.8 462.6 701.0 457.5C695.2 452.4 690.0 446.2 686.6 441.1C683.2 436.0 681.4 431.8 680.5 426.7C679.6 421.6 680.1 416.1 681.5 410.3C682.9 404.5 685.8 397.3 688.7 391.9C691.6 386.5 697.3 380.3 699.0 378.0"/>
<path d="M681.0 439.0C676.6 439.0 662.4 439.1 654.6 439.2C646.8 439.3 639.7 438.5 634.0 439.5C628.3 440.5 624.7 442.8 620.5 445.4C616.3 448.0 612.7 451.3 608.8 455.0C604.9 458.7 601.6 462.4 597.3 467.8C593.0 473.2 587.8 481.1 583.0 487.5C578.2 493.9 572.8 501.0 568.7 506.0C564.6 511.0 560.3 515.5 558.6 517.4"/>
<path d="M568.7 475.9C568.4 477.9 567.5 484.2 567.0 488.0C566.5 491.8 567.2 493.9 565.8 498.8C564.4 503.7 559.8 514.3 558.6 517.4"/>
<path d="M558.6 517.4C561.5 516.4 569.3 514.1 575.8 511.7C582.2 509.3 590.6 505.4 597.3 503.1C604.0 500.8 612.9 498.9 616.0 498.0"/>
</svg>
<!-- TASKBAR -->
<div class="abs" id="taskbar" style="overflow:hidden">
<div class="abs" style="left:147px;top:0;width:36px;height:30px;background:#454545"></div>
<div class="abs" style="left:114px;top:27px;width:32px;height:3px;background:#f3e0ad"></div>
<div class="abs" style="left:147px;top:27px;width:36px;height:3px;background:#f3e0ad"></div>
<div class="abs" style="left:891px;top:27px;width:28px;height:3px;background:#f3e0ad"></div>
<span class="t fd" style="left:156.5px;top:-2.5px;color:#0b0b0b;--w:70;letter-spacing:-0.530px">FabLab PACA</span>
<span class="t fd" style="left:292.5px;top:-2.5px;color:#0b0b0b;--w:35;letter-spacing:-0.738px">Games</span>
<span class="t fd" style="left:405.0px;top:-2.5px;color:#0b0b0b;--w:48;letter-spacing:-0.078px">malinette</span>
<span class="t fd" style="left:514.5px;top:-2.5px;color:#0b0b0b;--w:67;letter-spacing:-0.277px">Open Frac#2</span>
<span class="t tr" style="left:18.200px;top:5.1px;color:#0b0b0b;--w:88;letter-spacing:-0.041px">Disque local (C:)</span>
<svg class="abs" style="left:10px;top:7px" width="16" height="16" viewBox="0 0 16 16"><path d="M0 2.300L6.500 1.400V7.600H0zM7.500 1.250L16 0V7.600H7.500zM0 8.500H6.500V14.700L0 13.800zM7.500 8.500H16V16L7.500 14.800z" fill="#fff"/></svg>
<svg class="abs" style="left:44.5px;top:6px" width="18" height="18" viewBox="0 0 18 18"><circle cx="11" cy="6.500" r="5.500" fill="none" stroke="#fff" stroke-width="1.400"/><path d="M7 10.500L1 17" stroke="#fff" stroke-width="1.600"/></svg>
<svg class="abs" style="left:80px;top:7.5px" width="20" height="15" viewBox="0 0 20 15"><rect x="3.500" y="1" width="13" height="13" fill="none" stroke="#fff" stroke-width="1.300"/><path d="M1 3V12M19 3V12" stroke="#fff" stroke-width="1.300"/></svg>
<svg class="abs" style="left:119.5px;top:7.5px" width="17" height="15" viewBox="0 0 17 15"><path d="M0 1.500H6.500L8 3.500H17V14H0z" fill="#f5cf5c"/><path d="M0 5H17V14H0z" fill="#fbe49a"/><path d="M4 9H13V14H4z" fill="#3aa3e8"/><path d="M6.500 11.500H10.500V14H6.500z" fill="#fbe49a"/></svg>
<svg class="abs" style="left:156px;top:6px" width="18" height="18" viewBox="0 0 18 18"><circle cx="9" cy="9" r="8.300" fill="#f39a1f"/><circle cx="8" cy="7.800" r="5.600" fill="#3d55b8"/><path d="M4.500 4.500c1.500-1.500 4-2 6-1-1.500.3-2.500 1-3 2z" fill="#7a8fe0"/><path d="M16.500 5c1.800 5-1.200 12-7.500 12.300C4 17.300 .7 13.500 .7 9 2 12 5 13.500 8 12.500c3-1 4-3.300 3-5.300 2.300.3 4.500-.7 5.500-2.200z" fill="#e9681a"/><path d="M11 7.200c-1-1.500-2.800-1.700-4.200-1.200.8.500 1.200 1.200 1.200 2 1 .3 2.200.1 3-.8z" fill="#f7c23f"/></svg>
<svg class="abs" style="left:193.5px;top:6.5px" width="17" height="17" viewBox="0 0 17 17"><rect width="17" height="17" rx="1" fill="#b30b0b"/><text x="8.500" y="13" font-family="Liberation Sans" font-weight="bold" font-style="italic" font-size="12" fill="#fff" text-anchor="middle">Fz</text></svg>
<svg class="abs" style="left:229.5px;top:6px" width="20" height="18" viewBox="0 0 20 18"><path d="M5 0l5 3.200-5 3.200L0 3.200zM15 0l5 3.200-5 3.200-5-3.200zM0 9.600l5-3.200 5 3.200-5 3.200zM20 9.600l-5-3.200-5 3.200 5 3.200zM5 14l5-3.200 5 3.200-5 3.200z" fill="#0d7fe6"/></svg>
<svg class="abs" style="left:266.5px;top:6.5px" width="19" height="17" viewBox="0 0 19 17"><path d="M6.500 0H12.500L19 11.500H13z" fill="#f7c72c"/><path d="M6.500 0L9.500 5.500 3 17 0 11.500z" fill="#1da462"/><path d="M6.500 11.500H19L16 17H3z" fill="#3b79e0"/></svg>
<svg class="abs" style="left:304px;top:6px" width="18" height="18" viewBox="0 0 18 18"><circle cx="9" cy="9" r="8.500" fill="#163a6b"/><circle cx="11.800" cy="6.500" r="3" fill="none" stroke="#fff" stroke-width="1.500"/><circle cx="6" cy="12" r="2.300" fill="#fff"/><path d="M0.500 9l6 2.500 4-4" stroke="#fff" stroke-width="1.800" fill="none"/></svg>
<svg class="abs" style="left:342.5px;top:6px" width="16" height="18" viewBox="0 0 16 18"><path d="M2 7H14L12.500 18H3.500z" fill="#e7e1d8"/><path d="M4 7h2l.3 11H4.800zM8 7h2l-.3 11H8.300zM11.500 7h1.800L12 18h-1.200z" fill="#d62a2a"/><circle cx="4.500" cy="5" r="2.800" fill="#f1e7cf"/><circle cx="8" cy="3.500" r="3" fill="#f6eeda"/><circle cx="11.500" cy="5" r="2.800" fill="#eadfc3"/></svg>
<svg class="abs" style="left:378px;top:6px" width="18" height="18" viewBox="0 0 18 18"><path d="M2 12V8a7 7 0 0 1 14 0v4" fill="none" stroke="#1c2fb8" stroke-width="2.200"/><rect x="0.500" y="9" width="4" height="7" rx="1.500" fill="#1c2fb8"/><rect x="13.500" y="9" width="4" height="7" rx="1.500" fill="#1c2fb8"/><ellipse cx="9" cy="12" rx="4.500" ry="3.500" fill="#f5c21c"/><path d="M5 12h8" stroke="#d8481c" stroke-width="1.500"/></svg>
<svg class="abs" style="left:415.5px;top:6px" width="17" height="18" viewBox="0 0 17 18"><path d="M7 0h3l5.500 14H1.500z" fill="#f48b1c"/><path d="M5.700 4.500h5.600l1 2.800H4.700zM3.700 10h9.600l1 2.700H2.700z" fill="#f3f3f3"/><path d="M0 14H17V17.500H0z" fill="#e57a12"/></svg>
<svg class="abs" style="left:452px;top:6px" width="18" height="18" viewBox="0 0 18 18"><circle cx="9" cy="9" r="7.500" fill="#19aef0"/><circle cx="4.500" cy="4.500" r="4" fill="#19aef0"/><circle cx="13.500" cy="13.500" r="4" fill="#19aef0"/><text x="9" y="13.300" font-family="Liberation Sans" font-weight="bold" font-size="12" fill="#fff" text-anchor="middle">S</text></svg>
<svg class="abs" style="left:491.5px;top:6.5px" width="13" height="17" viewBox="0 0 13 17"><rect width="13" height="17" rx="1" fill="#fff"/><rect x="2" y="2" width="9" height="3" fill="#222"/><g fill="#222"><rect x="2" y="7" width="2" height="2"/><rect x="5.500" y="7" width="2" height="2"/><rect x="9" y="7" width="2" height="2"/><rect x="2" y="10.300" width="2" height="2"/><rect x="5.500" y="10.300" width="2" height="2"/><rect x="9" y="10.300" width="2" height="2"/><rect x="2" y="13.600" width="2" height="2"/><rect x="5.500" y="13.600" width="2" height="2"/><rect x="9" y="13.600" width="2" height="2"/></g></svg>
<svg class="abs" style="left:527px;top:6px" width="17" height="18" viewBox="0 0 17 18"><rect x="1" y="2" width="14" height="15" fill="#a9cbe3"/><rect x="2.500" y="3.500" width="11" height="12" fill="#dfeaf2"/><path d="M4 6h8M4 8.500h8M4 11h8M4 13.500h6" stroke="#8aa7bd" stroke-width="1"/><path d="M2.500 1v3M5 1v3M7.500 1v3M10 1v3M12.500 1v3" stroke="#666" stroke-width="1"/><path d="M12 13l4 1-4 3z" fill="#e8d9a0"/></svg>
<svg class="abs" style="left:564.5px;top:6.5px" width="14" height="17" viewBox="0 0 14 17"><path d="M0 0H9L14 5V17H0z" fill="#fff"/><path d="M9 0L14 5H9z" fill="#bdbdbd"/></svg>
<svg class="abs" style="left:601px;top:6px" width="16" height="18" viewBox="0 0 16 18"><defs><linearGradient id="ggr" x1="0" y1="0" x2="0" y2="1"><stop offset="0" stop-color="#1565d8"/><stop offset=".45" stop-color="#1565d8"/><stop offset=".7" stop-color="#10a878"/></linearGradient></defs><path d="M2 2H6.500V17H2z" fill="url(#ggr)"/><path d="M6.500 10.500c0-4 3-6 8.500-6v4.300c-3 0-4.500 1.200-4.500 4.200v4H6.500z" fill="#17c264"/></svg>
<svg class="abs" style="left:637px;top:6.5px" width="18" height="17" viewBox="0 0 18 17"><rect x=".7" y=".7" width="16.600" height="15.600" rx="1.500" fill="#3b3b3b" stroke="#e8e8e8" stroke-width="1.400"/><text x="9" y="11.500" font-family="Liberation Sans" font-weight="bold" font-size="10" fill="#f39a1e" text-anchor="middle">S</text><path d="M3 13.500h12" stroke="#cfcfcf" stroke-width="1"/></svg>
<svg class="abs" style="left:675.5px;top:6.5px" width="15" height="17" viewBox="0 0 15 17"><path d="M13 2.500H5.500a4.500 4.500 0 0 0 0 9H13M8 7H14M1 15H14" stroke="#1a5fd6" stroke-width="2" fill="none"/></svg>
<svg class="abs" style="left:711px;top:7px" width="18" height="16" viewBox="0 0 18 16"><path d="M0 9l9-7 1.500 1.500L6 7h8" stroke="#ea7a1c" stroke-width="2" fill="none"/><circle cx="11.500" cy="9.500" r="5.500" fill="#ea7a1c"/><circle cx="11.500" cy="9.500" r="3.300" fill="#fff"/><circle cx="11.500" cy="9.500" r="2" fill="#1f5fa8"/></svg>
<svg class="abs" style="left:748px;top:6px" width="18" height="18" viewBox="0 0 18 18"><path d="M1 1.500L9 0l8 1.500c0 8-3 13-8 16C4 14.500 1 9.500 1 1.500z" fill="#f2f2f2"/><path d="M1 1.500L9 0v5L2 8.500C1.300 6.500 1 4 1 1.500z" fill="#1aa0b8"/><path d="M9 5v12.500C6 15.500 3.500 12.500 2 8.500z" fill="#e9e9e9"/><path d="M9 6.500v5" stroke="#c0392b" stroke-width="1.200"/></svg>
<svg class="abs" style="left:786px;top:6px" width="17" height="18" viewBox="0 0 17 18"><path d="M15 4.500A7 7 0 1 0 15 13.500" stroke="#1d8ce8" stroke-width="4.200" fill="none"/></svg>
<svg class="abs" style="left:822px;top:6px" width="18" height="18" viewBox="0 0 18 18"><path d="M1 11L8 1l3 3-6 9z" fill="#c9d6ee"/><path d="M3 12l9-3 5 3-9 5z" fill="#3f6fd1"/><path d="M7 8h6v3.500H7z" fill="#f5e61e"/><path d="M3 12l5 5v-1.500L3 10.500z" fill="#8ea4d6"/></svg>
<svg class="abs" style="left:859.5px;top:6.5px" width="17" height="17" viewBox="0 0 17 17"><defs><linearGradient id="gball" x1="0" y1="0" x2="1" y2="1"><stop offset="0" stop-color="#f59ad0"/><stop offset=".5" stop-color="#c9a6f2"/><stop offset="1" stop-color="#63c7f2"/></linearGradient></defs><circle cx="8.500" cy="8.500" r="8" fill="url(#gball)"/><circle cx="10" cy="10" r="3.500" fill="#f7f7f7"/><path d="M3 4l8 7" stroke="#555" stroke-width="1.200"/></svg>
<svg class="abs" style="left:897px;top:6.5px" width="17" height="17" viewBox="0 0 17 17"><rect x=".5" y=".5" width="16" height="16" fill="#0b5fae" stroke="#2a86d6"/><text x="8.500" y="12" font-family="Liberation Sans" font-weight="bold" font-size="9" fill="#9fd3ff" text-anchor="middle">Ps</text></svg>
<svg class="abs" style="left:933.5px;top:6.5px" width="17" height="17" viewBox="0 0 17 17"><rect x=".5" y=".5" width="16" height="16" fill="#d9730b" stroke="#f29a2e"/><text x="8.500" y="12" font-family="Liberation Sans" font-weight="bold" font-size="9" fill="#ffd08a" text-anchor="middle">Ai</text></svg>
<svg class="abs" style="left:970.5px;top:6.5px" width="17" height="17" viewBox="0 0 17 17"><rect x=".5" y=".5" width="16" height="16" fill="#8f1656" stroke="#b9337c"/><text x="8.500" y="12" font-family="Liberation Sans" font-weight="bold" font-size="9" fill="#f5a6d3" text-anchor="middle">ID</text></svg>
<svg class="abs" style="left:1007px;top:6.5px" width="17" height="17" viewBox="0 0 17 17"><rect x=".5" y=".5" width="16" height="16" fill="#c41c1c" stroke="#e04a3a"/><text x="8.500" y="12" font-family="Liberation Sans" font-weight="bold" font-size="9" fill="#ffb0a0" text-anchor="middle">FL</text></svg>
<svg class="abs" style="left:1044.5px;top:6.5px" width="17" height="17" viewBox="0 0 17 17"><rect x=".5" y=".5" width="16" height="16" fill="#4b4f86" stroke="#7c80b8"/><text x="8.500" y="12" font-family="Liberation Sans" font-weight="bold" font-size="9" fill="#c9cdf5" text-anchor="middle">AE</text></svg>
<svg class="abs" style="left:1099px;top:10.5px" width="14" height="9" viewBox="0 0 14 9"><path d="M1 7.500L7 1.500 13 7.500" stroke="#fff" stroke-width="1.300" fill="none"/></svg>
<svg class="abs" style="left:1129px;top:8.5px" width="18" height="13" viewBox="0 0 18 13"><rect x="5" y="3" width="11" height="7" fill="none" stroke="#fff" stroke-width="1.300"/><rect x="16.500" y="5" width="1.500" height="3" fill="#fff"/><rect x="6.500" y="4.500" width="8" height="4" fill="#fff"/><path d="M0 6.500h2.500M2.500 3.500v6M2.500 4.500h2.500M2.500 8.500h2.500" stroke="#fff" stroke-width="1.200" fill="none"/></svg>
<svg class="abs" style="left:1164px;top:8px" width="14" height="14" viewBox="0 0 14 14"><path d="M1 12A11 11 0 0 1 12 1" stroke="#fff" stroke-width="1.300" fill="none"/><path d="M4.500 12A7.500 7.500 0 0 1 12 4.500" stroke="#fff" stroke-width="1.300" fill="none"/><path d="M8 12a4 4 0 0 1 4-4" stroke="#fff" stroke-width="1.300" fill="none"/><rect x="10" y="10" width="3" height="3" fill="#fff"/></svg>
<svg class="abs" style="left:1193px;top:8px" width="17" height="14" viewBox="0 0 17 14"><path d="M.7 4.500H3.500L7.500 .8V13.200L3.500 9.500H.7z" fill="none" stroke="#fff" stroke-width="1.200"/><path d="M10 4.500a3.500 3.500 0 0 1 0 5" stroke="#fff" stroke-width="1.100" fill="none"/><path d="M12.300 2.500a6.500 6.500 0 0 1 0 9" stroke="#bbb" stroke-width="1.100" fill="none"/><path d="M14.600 .8a9 9 0 0 1 0 12.400" stroke="#777" stroke-width="1.100" fill="none"/></svg>
<svg class="abs" style="left:1225px;top:7px" width="17" height="16" viewBox="0 0 17 16"><path d="M0 0H15V11H0z" fill="#fff"/><path d="M2.500 3h10M2.500 5.500h10M2.500 8h5" stroke="#222" stroke-width="1.100"/><circle cx="12" cy="11" r="3.800" fill="#222" stroke="#fff" stroke-width="1.200"/><path d="M10 11h4" stroke="#fff" stroke-width="1.200"/></svg>
<svg class="abs" style="left:1253.5px;top:8.5px" width="23" height="13" viewBox="0 0 23 13"><rect x=".7" y=".7" width="21.600" height="11.600" rx="1" fill="none" stroke="#fff" stroke-width="1.300"/><path d="M3 4h17M3 6.500h17" stroke="#fff" stroke-width="1.200" stroke-dasharray="1.300 1"/><path d="M5.500 9.500h12" stroke="#fff" stroke-width="1.200"/></svg>
<span class="t" style="left:1308.500px;top:8px;font-size:12px;color:#fff;--w:27;letter-spacing:-0.606px">16:10</span>
<div class="abs" style="left:1361px;top:0;width:1px;height:30px;background:#4a4a4a"></div>
</div>
</body>
</html>
